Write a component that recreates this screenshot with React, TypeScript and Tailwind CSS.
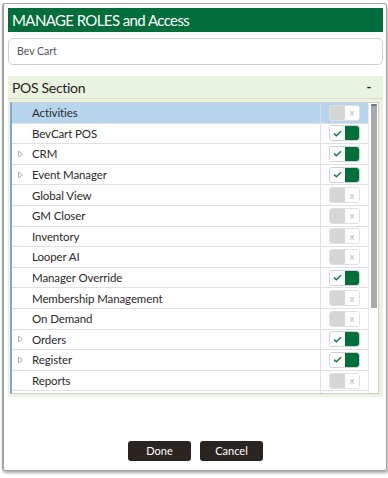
import React from "react";

const rows: { name: string; on: boolean; exp?: boolean }[] = [
  { name: "Activities", on: false },
  { name: "BevCart POS", on: true },
  { name: "CRM", on: true, exp: true },
  { name: "Event Manager", on: true, exp: true },
  { name: "Global View", on: false },
  { name: "GM Closer", on: false },
  { name: "Inventory", on: false },
  { name: "Looper AI", on: false },
  { name: "Manager Override", on: true },
  { name: "Membership Management", on: false },
  { name: "On Demand", on: false },
  { name: "Orders", on: true, exp: true },
  { name: "Register", on: true, exp: true },
  { name: "Reports", on: false },
  { name: "", on: true },
];

function Toggle({ on }: { on: boolean }) {
  if (on) {
    return (
      <div className="w-[31px] h-[16px] flex rounded-[3px] border border-[#d0d0d0] overflow-hidden">
        <div className="w-[15px] h-full bg-white flex items-center justify-center">
          <svg width="9" height="7" viewBox="0 0 9 7">
            <path d="M1 3.6 L3.4 5.8 L8 1.2" fill="none" stroke="#1d7a45" strokeWidth="1.5" />
          </svg>
        </div>
        <div className="flex-1 h-full bg-[#006f3c] rounded-r-[2px]" />
      </div>
    );
  }
  return (
    <div className="w-[31px] h-[16px] flex rounded-[3px] border border-[#e0e0e0] overflow-hidden">
      <div className="w-[15px] h-full bg-[#d6d6d6]" />
      <div className="flex-1 h-full bg-white flex items-center justify-center text-[#b5b5b5] text-[9px] leading-none">
        x
      </div>
    </div>
  );
}

export default function App() {
  return (
    <div
      className="w-[388px] h-[478px] bg-white overflow-hidden"
      style={{ fontFamily: "Lato, 'Open Sans', sans-serif" }}
    >
      <div className="ml-[2px] mt-[3px] w-[385px] h-[468px] border border-[#a3a3a3] border-l-2 rounded-[3px] shadow-[1px_2px_3px_rgba(0,0,0,0.35)] flex flex-col pl-[4px] pr-[3px] pt-[4px]">
        <div className="h-[24px] bg-[#006d3b] text-white text-[15px] tracking-[-0.6px] pl-[4px] flex items-center leading-none">
          MANAGE ROLES and Access
        </div>
        <div className="mt-[6px] h-[27px] rounded-[5px] border border-[#cfcfcf] pl-[8px] text-[10.5px] text-[#555] flex items-center">
          Bev Cart
        </div>
        <div className="mt-[11px] bg-[#eaf2e0] pb-[3px]">
          <div className="h-[23px] flex items-center justify-between pl-[4px] pr-[12px] text-[14px] tracking-[-0.3px] text-[#222] border-b border-[#d7e3cb]">
            <span>POS Section</span>
            <span className="text-[13px] font-bold leading-none">-</span>
          </div>
          <div className="ml-[2px] mr-[4px] mt-[3px] h-[292px] bg-white border border-[#cfcfcf] border-l-2 border-l-[#7fa6cc] flex overflow-hidden">
            <div className="flex-1 flex flex-col">
              {rows.map((r, i) => (
                <div
                  key={i}
                  className={`h-[20.6px] shrink-0 flex items-stretch border-b border-[#e0e0e0] ${
                    i === 0 ? "bg-[#b8d5ee]" : ""
                  }`}
                >
                  <div className="flex-1 flex items-center text-[11.5px] tracking-[-0.1px] text-[#2a2a2a] relative pl-[20px]">
                    {r.exp && (
                      <svg className="absolute left-[6px] top-1/2 -translate-y-1/2" width="5" height="7" viewBox="0 0 5 7">
                        <path d="M0.5 0.5 L4.5 3.5 L0.5 6.5 Z" fill="none" stroke="#b0b0b0" strokeWidth="1" />
                      </svg>
                    )}
                    {r.name}
                  </div>
                  <div className="w-[48px] border-l border-[#e0e0e0] flex items-center justify-center">
                    <Toggle on={r.on} />
                  </div>
                </div>
              ))}
            </div>
            <div className="w-[10px] border-l border-[#e6e6e6] bg-white pt-[1px] pl-[2px] pr-[1px]">
              <div className="h-[204px] bg-[#a9a9a9] rounded-t-[1px] border-t-2 border-[#777]" />
            </div>
          </div>
        </div>
        <div className="mt-[44px] flex justify-center gap-[9px]">
          <button className="w-[63px] h-[20px] bg-[#2b2522] text-white text-[11px] rounded-[3px] flex items-center justify-center">
            Done
          </button>
          <button className="w-[63px] h-[20px] bg-[#2b2522] text-white text-[11px] rounded-[3px] flex items-center justify-center">
            Cancel
          </button>
        </div>
      </div>
    </div>
  );
}
